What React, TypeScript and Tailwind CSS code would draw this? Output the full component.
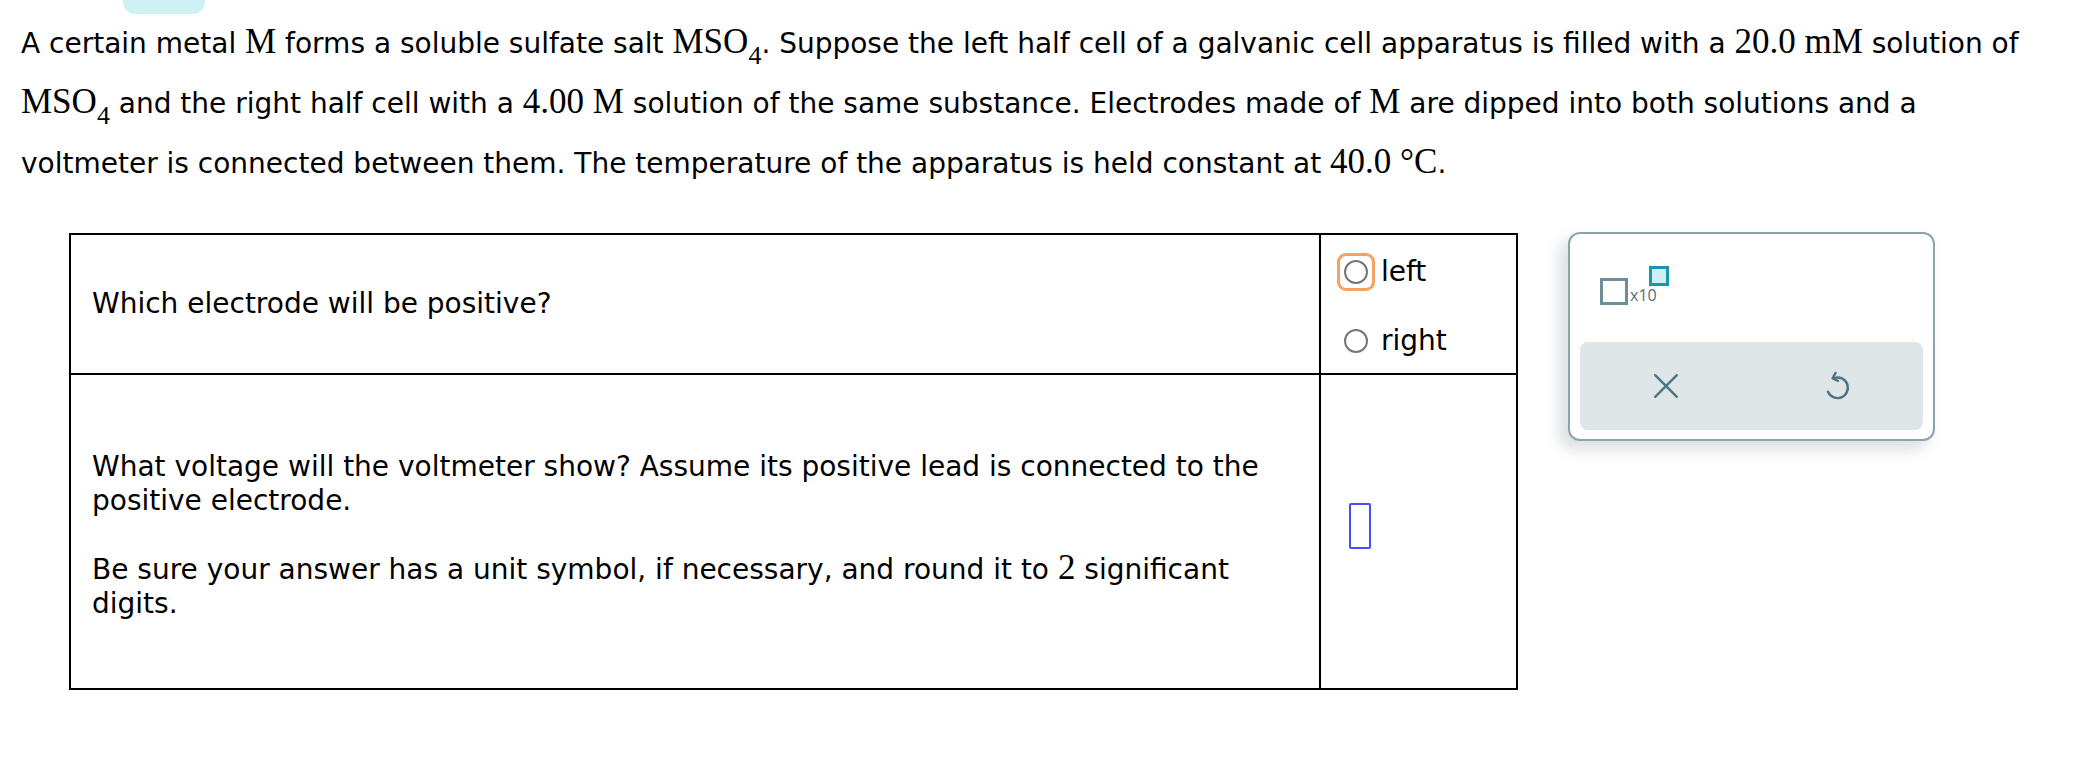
import React from 'react';

const serif = "font-['Liberation_Serif','Times_New_Roman',serif] text-[35px] leading-none";

function M({ children }: { children: React.ReactNode }) {
  return <span className={serif}>{children}</span>;
}

function MSO4() {
  return (
    <M>
      MSO
      <span className="relative top-[11px] text-[26px] leading-none">4</span>
    </M>
  );
}

function Radio({ label, focused }: { label: string; focused?: boolean }) {
  return (
    <label className="flex items-center">
      <span
        className={`flex h-[38px] w-[38px] items-center justify-center rounded-[9px] border-[3px] ${
          focused ? 'border-[#f4a264]' : 'border-transparent'
        }`}
      >
        <span className="h-[24px] w-[24px] rounded-full border-2 border-[#767676] bg-white" />
      </span>
      <span className="ml-[6px] leading-none">{label}</span>
    </label>
  );
}

function XIcon() {
  return (
    <svg width="26" height="26" viewBox="0 0 24 24" fill="none" stroke="#4d7480" strokeWidth="2.2" strokeLinecap="round">
      <path d="M2 2 L22 22 M22 2 L2 22" />
    </svg>
  );
}

function UndoIcon() {
  return (
    <svg width="31" height="31" viewBox="0 0 24 24" fill="none" stroke="#4d7480" strokeWidth="1.9" strokeLinecap="round" strokeLinejoin="round">
      <path d="M4.6 16 A8 8 0 1 0 9.8 5.3" />
      <path d="M10.5 1.5 L8.2 5.6 L12.4 7.6" />
    </svg>
  );
}

export default function App() {
  return (
    <div className="min-h-screen bg-white font-['DejaVu_Sans',Verdana,sans-serif] text-[28px] text-black">
      <div className="ml-[123px] h-[14px] w-[82px] rounded-b-[12px] bg-[#cff0f5]" />

      <p className="whitespace-nowrap px-[21px] leading-[60px]">
        A certain metal <M>M</M> forms a soluble sulfate salt <MSO4 />. Suppose the left half cell of a galvanic cell
        apparatus is filled with a <M>20.0 mM</M> solution of
        <br />
        <MSO4 /> and the right half cell with a <M>4.00 M</M> solution of the same substance. Electrodes made of{' '}
        <M>M</M> are dipped into both solutions and a
        <br />
        voltmeter is connected between them. The temperature of the apparatus is held constant at <M>40.0 °C</M>.
      </p>

      <div className="mt-[39px] flex items-start pl-[69px]">
        <div className="grid w-[1449px] grid-cols-[1fr_195px] border-2 border-black">
          <div className="flex h-[140px] items-center border-b-2 border-r-2 border-black pl-[21px]">
            Which electrode will be positive?
          </div>
          <div className="flex flex-col justify-center gap-[31px] border-b-2 border-black pl-[16px] pt-[4px]">
            <Radio label="left" focused />
            <Radio label="right" />
          </div>

          <div className="flex h-[313px] items-center border-r-2 border-black pl-[21px] pr-[40px] pt-[8px] leading-[34px]">
            <div>
              <p>What voltage will the voltmeter show? Assume its positive lead is connected to the positive electrode.</p>
              <p className="mt-[32px]">
                Be sure your answer has a unit symbol, if necessary, and round it to <M>2</M> significant digits.
              </p>
            </div>
          </div>
          <div className="flex items-center pb-[12px] pl-[28px]">
            <div className="h-[46px] w-[22px] rounded-[2px] border-2 border-[#4b4bff]" />
          </div>
        </div>

        <div className="-mt-px ml-[50px] flex h-[209px] w-[367px] flex-col rounded-[12px] border-2 border-[#8ba4ab] bg-white shadow-[-8px_8px_16px_rgba(60,90,100,0.2)]">
          <div className="flex-1 pl-[30px] pt-[32px]">
            <div className="flex h-[39px] items-end">
              <div className="h-[27px] w-[28px] border-[3px] border-[#6f8f98]" />
              <span className="mb-[2px] ml-[2px] font-['Open_Sans',sans-serif] text-[16px] leading-none text-[#4f707a]">x10</span>
              <div className="-ml-[8px] h-[20px] w-[20px] self-start border-[3px] border-[#1697ad] bg-[#cdeef3]" />
            </div>
          </div>
          <div className="mx-[10px] mb-[9px] flex h-[88px] rounded-[8px] bg-[#dfe6e8]">
            <div className="flex flex-1 items-center justify-center">
              <XIcon />
            </div>
            <div className="flex flex-1 items-center justify-center">
              <UndoIcon />
            </div>
          </div>
        </div>
      </div>
    </div>
  );
}
